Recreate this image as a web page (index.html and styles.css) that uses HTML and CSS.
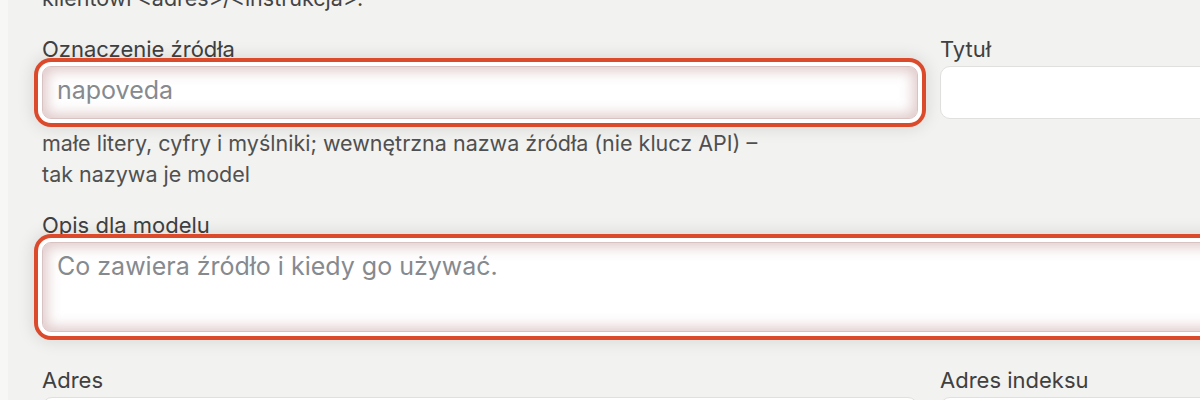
FILE: index.html
```html
<!DOCTYPE html>
<html lang="pl">
<head>
    <meta charset="UTF-8">
    <meta name="viewport" content="width=device-width, initial-scale=1.0">
    <title>Źródło</title>
    <link rel="stylesheet" href="styles.css">
</head>
<body>
    <div class="panel">
        <p class="intro">klientowi &lt;adres&gt;/&lt;instrukcja&gt;.</p>

        <div class="form">
            <div class="field">
                <label for="slug">Oznaczenie źródła</label>
                <input type="text" id="slug" class="marked" placeholder="napoveda">
                <p class="hint">małe litery, cyfry i myślniki; wewnętrzna nazwa źródła (nie klucz API) –<br>tak nazywa je model</p>
            </div>

            <div class="field">
                <label for="title">Tytuł</label>
                <input type="text" id="title">
            </div>

            <div class="field wide">
                <label for="desc">Opis dla modelu</label>
                <textarea id="desc" class="marked" placeholder="Co zawiera źródło i kiedy go używać."></textarea>
            </div>

            <div class="field">
                <label for="url">Adres</label>
                <input type="text" id="url">
            </div>

            <div class="field">
                <label for="index">Adres indeksu</label>
                <input type="text" id="index">
            </div>
        </div>
    </div>
</body>
</html>
```

FILE: styles.css
```css
html, body {
    margin: 0;
    padding: 0;
    height: 400px;
    overflow: hidden;
}

body {
    font-family: 'Inter', 'Noto Sans', sans-serif;
    background: #f7f7f6;
    color: #3b3b3b;
}

.panel {
    margin-left: 8px;
    padding: 0 0 0 34px;
    width: 1400px;
    min-height: 400px;
    background: #f2f2f0;
}

.intro {
    margin: -17px 0 0;
    font-size: 21.5px;
    line-height: 31px;
    color: #444;
}

.form {
    display: grid;
    grid-template-columns: 876px 1fr;
    column-gap: 22px;
    row-gap: 22px;
    margin-top: 22px;
}

.field {
    display: flex;
    flex-direction: column;
}

.field.wide {
    grid-column: span 2;
    margin-bottom: 13px;
}

label {
    display: block;
    font-size: 22px;
    line-height: 26px;
    color: #404040;
    margin-bottom: 4px;
}

input, textarea {
    box-sizing: border-box;
    width: 100%;
    font-family: 'Inter', 'Noto Sans', sans-serif;
    font-size: 25px;
    color: #333;
    background: #fff;
    border: 1px solid #e0e0de;
    border-radius: 10px;
    outline: none;
}

input {
    height: 53px;
    padding: 0 14px 5px;
}

textarea {
    height: 90px;
    padding: 8px 14px;
    line-height: 30px;
    resize: none;
}

input::placeholder, textarea::placeholder {
    color: #868a8f;
}

/* highlighted fields: white gap, red ring, soft halo */
.marked {
    position: relative;
    border-radius: 9px;
    border-color: #d9c2c2;
    box-shadow:
        inset 0 0 13px 4px rgba(170, 105, 105, 0.36),
        0 0 0 4px #fff,
        0 0 0 8px #dc4a2c,
        0 0 16px 10px rgba(0, 0, 0, 0.1);
}

.hint {
    margin: 9px 0 0;
    font-size: 21.5px;
    line-height: 31px;
    color: #505050;
}
```
